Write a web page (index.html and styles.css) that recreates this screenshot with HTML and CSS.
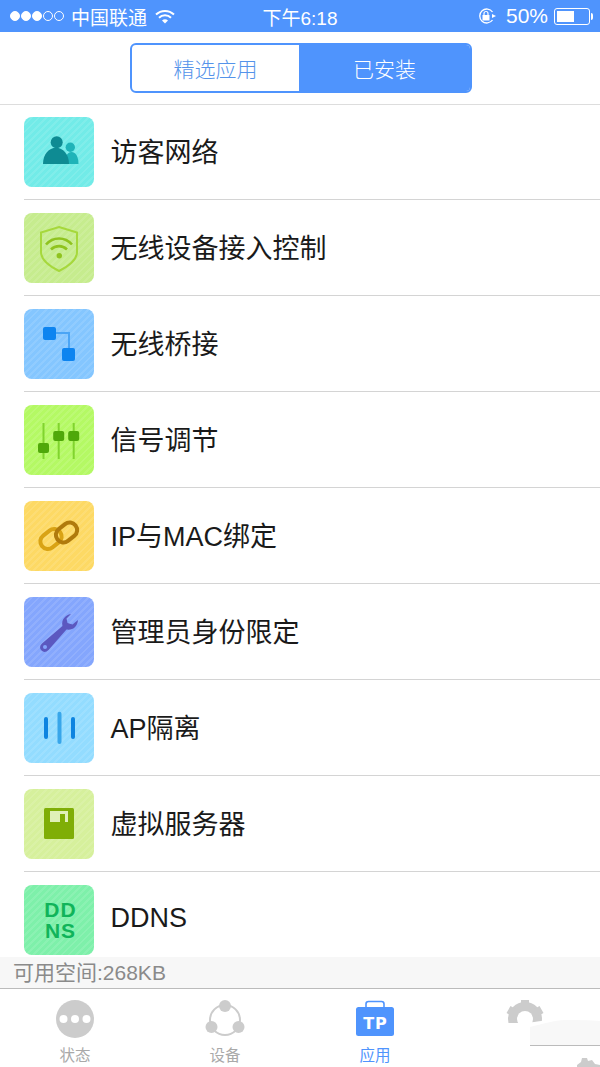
FILE: index.html
```html
<!DOCTYPE html>
<html lang="zh-CN">
<head>
    <meta charset="UTF-8">
    <meta name="viewport" content="width=device-width, initial-scale=1.0">
    <title>应用</title>
    <link rel="stylesheet" href="styles.css">
</head>
<body>
    <div class="status-bar">
        <div class="status-left">
            <span class="signal"><i class="on"></i><i class="on"></i><i class="on"></i><i></i><i></i></span>
            <span>中国联通</span>
            <svg class="wifi" width="20" height="15" viewBox="0 0 20 15">
                <path d="M1 5.500a13 13 0 0 1 18 0M4 8.800a8.600 8.600 0 0 1 12 0" fill="none" stroke="#fff" stroke-width="2"/>
                <path d="M7 11.600a4.300 4.300 0 0 1 6 0L10 14.600z" fill="#fff"/>
            </svg>
        </div>
        <div class="status-time">下午6:18</div>
        <div class="status-right">
            <svg width="20" height="18" viewBox="0 0 20 18">
                <path d="M15.500 5A7 7 0 1 0 15.500 13" fill="none" stroke="#fff" stroke-width="1.300"/>
                <path d="M15 7l4 2-4 2z" fill="#fff"/>
                <rect x="5.500" y="8" width="7" height="5.500" fill="#fff"/>
                <path d="M7 8V6.500a2 2 0 0 1 4 0V8" fill="none" stroke="#fff" stroke-width="1.200"/>
            </svg>
            <span class="battery-text">50%</span>
            <span class="battery"><i></i></span>
        </div>
    </div>

    <div class="top-bar">
        <div class="segment">
            <div class="segment-item">精选应用</div>
            <div class="segment-item active">已安装</div>
        </div>
    </div>

    <ul class="app-list">
        <li class="app-row">
            <span class="app-icon teal">
                <svg viewBox="0 0 70 70">
                    <circle cx="46.300" cy="30.300" r="4.700" fill="#1fb3b8"/>
                    <path d="M41 47c0-7 2-12 6.500-12S54.500 40 54.500 47z" fill="#1fb3b8"/>
                    <circle cx="32.700" cy="25.300" r="6" fill="#0e8b93"/>
                    <path d="M19 47c0-10 6-16.300 13-16.300S45 37 45 47z" fill="#0e8b93"/>
                </svg>
            </span>
            <span class="app-name">访客网络</span>
        </li>
        <li class="app-row">
            <span class="app-icon lime">
                <svg viewBox="0 0 70 70">
                    <path d="M35 14l18 5.500V39c0 8-10 15-18 19-8-4-18-11-18-19V19.500z" fill="none" stroke="#a6d83c" stroke-width="2"/>
                    <path d="M22 31.500c7-8 19-8 26 0M27 36.500c4.500-4.500 11.500-4.500 16 0" fill="none" stroke="#8fc31f" stroke-width="2.600"/>
                    <circle cx="35.300" cy="42.700" r="2.700" fill="#8fc31f"/>
                </svg>
            </span>
            <span class="app-name">无线设备接入控制</span>
        </li>
        <li class="app-row">
            <span class="app-icon blue">
                <svg viewBox="0 0 70 70">
                    <path d="M32 24h13v15" fill="none" stroke="#4ba5f5" stroke-width="2"/>
                    <rect x="19" y="18" width="13" height="13" rx="2" fill="#0d84f0"/>
                    <rect x="38" y="39" width="13" height="13" rx="2" fill="#0d84f0"/>
                </svg>
            </span>
            <span class="app-name">无线桥接</span>
        </li>
        <li class="app-row">
            <span class="app-icon green">
                <svg viewBox="0 0 70 70">
                    <path d="M19.500 18v36M34.700 18v36M49.700 18v36" stroke="#80d42e" stroke-width="2"/>
                    <rect x="14" y="38" width="11" height="10" rx="2" fill="#4fa80a"/>
                    <rect x="29.200" y="26" width="11" height="10" rx="2" fill="#4fa80a"/>
                    <rect x="44.200" y="26" width="11" height="10" rx="2" fill="#4fa80a"/>
                </svg>
            </span>
            <span class="app-name">信号调节</span>
        </li>
        <li class="app-row">
            <span class="app-icon yellow">
                <svg viewBox="0 0 70 70">
                    <rect x="-11.500" y="-7.500" width="23" height="15" rx="7.500" transform="translate(27 38) rotate(-38)" fill="none" stroke="#d9a314" stroke-width="4"/>
                    <rect x="-11.500" y="-7.500" width="23" height="15" rx="7.500" transform="translate(42.500 31.500) rotate(-38)" fill="none" stroke="#b07a0c" stroke-width="4"/>
                </svg>
            </span>
            <span class="app-name">IP与MAC绑定</span>
        </li>
        <li class="app-row">
            <span class="app-icon periwinkle">
                <svg viewBox="0 0 70 70">
                    <path d="M47 17c-6 1-10 6-8.500 12L18 46.500c-2.500 2.500-2.500 5-.5 7s4.500 2 7-.5l18-20.500c6.500 1 11-3 11.500-9.500l-5.500 4.500-5-1.500-1-4.500z" fill="#5b58c0"/>
                    <circle cx="21" cy="50" r="2" fill="#84a4fc"/>
                </svg>
            </span>
            <span class="app-name">管理员身份限定</span>
        </li>
        <li class="app-row">
            <span class="app-icon sky">
                <svg viewBox="0 0 70 70">
                    <rect x="20" y="24" width="4" height="22" rx="2" fill="#0d84e0"/>
                    <rect x="33.500" y="18.700" width="4" height="32.300" rx="2" fill="#38a6ea"/>
                    <rect x="47" y="24" width="4" height="22" rx="2" fill="#0d84e0"/>
                </svg>
            </span>
            <span class="app-name">AP隔离</span>
        </li>
        <li class="app-row">
            <span class="app-icon pale">
                <svg viewBox="0 0 70 70">
                    <rect x="20" y="19" width="30" height="31" rx="1.500" fill="#7fae06"/>
                    <rect x="26" y="22" width="18" height="11" fill="#dff0b8"/>
                    <rect x="36" y="25" width="5" height="8" fill="#7fae06"/>
                </svg>
            </span>
            <span class="app-name">虚拟服务器</span>
        </li>
        <li class="app-row">
            <span class="app-icon mint"><span class="ddns-mark">DD<br>NS</span></span>
            <span class="app-name">DDNS</span>
        </li>
    </ul>

    <div class="storage">可用空间:268KB</div>

    <nav class="tab-bar">
        <div class="tab">
            <svg width="40" height="40" viewBox="0 0 40 40">
                <circle cx="20" cy="20" r="19" fill="#ccc"/>
                <circle cx="8.500" cy="20" r="4" fill="#fff"/>
                <circle cx="20" cy="20" r="4" fill="#fff"/>
                <circle cx="31.500" cy="20" r="4" fill="#fff"/>
            </svg>
            <span>状态</span>
        </div>
        <div class="tab">
            <svg width="40" height="40" viewBox="0 0 40 40">
                <circle cx="20" cy="21" r="15" fill="none" stroke="#ccc" stroke-width="2"/>
                <circle cx="20" cy="7" r="6" fill="#ccc"/>
                <circle cx="6.500" cy="28" r="6" fill="#ccc"/>
                <circle cx="33.500" cy="28" r="6" fill="#ccc"/>
            </svg>
            <span>设备</span>
        </div>
        <div class="tab active">
            <svg width="40" height="40" viewBox="0 0 40 40">
                <path d="M11 9V5A2.500 2.500 0 0 1 13.500 2.500h13A2.500 2.500 0 0 1 29 5V9" fill="none" stroke="#4f94fd" stroke-width="1.600"/>
                <rect x="1" y="8" width="38" height="29" rx="2.500" fill="#4f94fd"/>
                <text x="20.500" y="30" text-anchor="middle" class="bag-text">TP</text>
            </svg>
            <span>应用</span>
        </div>
        <div class="tab">
            <svg width="40" height="40" viewBox="0 0 40 40">
                <circle cx="20" cy="20" r="12.500" fill="none" stroke="#ccc" stroke-width="9"/>
                <path d="M20 20V1M20 20L36.500 10.500M20 20L36.500 29.500M20 20L3.500 10.500M20 20L3.500 29.500M20 20V39" stroke="#ccc" stroke-width="8"/>
                <circle cx="20" cy="20" r="8" fill="#fff"/>
            </svg>
            <span></span>
        </div>
    </nav>

    <!-- white smear lying over the corner of the tab bar -->
    <svg class="corner-smear" width="110" height="52" viewBox="0 0 110 52">
        <path d="M0 8h35c12-1 25-4 40-4s25 0 35 1v47H0z" fill="#fff"/>
        <path d="M40 12c12-3 25-7 35-7s25 0 35 1v24.500H40z" fill="#f8f8f8"/>
        <path d="M40 30.500h70" stroke="#bbb" stroke-width="1"/>
        <path d="M87 52v-2l4-3 1-4h5l1 3 4-1 3 4 5 1v2z" fill="#ccc"/>
    </svg>
</body>
</html>
```

FILE: styles.css
```css
* {
    box-sizing: border-box;
}
html, body {
    height: 100%;
}
body {
    position: relative;
    display: flex;
    flex-direction: column;
    height: 1067px;
    margin: 0;
    overflow: hidden;
    background-color: #fff;
    font-family: "Liberation Sans", "Noto Sans CJK SC", sans-serif;
}

/* status bar */
.status-bar {
    display: grid;
    grid-template-columns: 1fr auto 1fr;
    align-items: center;
    flex: none;
    height: 32px;
    padding: 0 10px;
    background-color: #4f94fd;
    color: #fff;
    font-size: 19px;
}
.status-left {
    display: flex;
    align-items: center;
    gap: 7px;
}
.signal {
    display: flex;
    gap: 1px;
}
.signal i {
    width: 10px;
    height: 10px;
    border: 1px solid #fff;
    border-radius: 50%;
}
.signal i.on {
    background-color: #fff;
}
.wifi {
    margin-left: 1px;
}
.status-right {
    display: flex;
    align-items: center;
    justify-content: flex-end;
    gap: 4px;
}
.battery-text {
    margin-left: 5px;
    font-size: 21px;
}
.battery {
    display: block;
    position: relative;
    width: 36px;
    height: 17px;
    margin-left: 2px;
    padding: 2px;
    border: 1px solid #fff;
    border-radius: 3px;
}
.battery::after {
    content: "";
    position: absolute;
    top: 4px;
    right: -4px;
    width: 2px;
    height: 7px;
    border-radius: 0 2px 2px 0;
    background-color: #fff;
}
.battery i {
    display: block;
    width: 17px;
    height: 100%;
    background-color: #fff;
}

/* segmented switch */
.top-bar {
    position: relative;
    z-index: 1;
    display: flex;
    justify-content: center;
    flex: none;
    height: 72px;
    padding: 11px 0 0 2px;
    box-shadow: 0 1px 0 #ddd;
    background-color: #fff;
}
.segment {
    display: flex;
    width: 342px;
    height: 50px;
    border: 2px solid #4f94fd;
    border-radius: 6px;
    overflow: hidden;
}
.segment-item {
    display: flex;
    align-items: center;
    justify-content: center;
    font-size: 21px;
    font-weight: 300;
    color: #5493ea;
}
.segment-item:first-child {
    width: 167px;
}
.segment-item.active {
    flex: 1;
    background-color: #4f94fd;
    color: #fff;
}

/* app rows */
.app-list {
    flex: 1;
    min-height: 0;
    margin: 0;
    padding: 0 0 0 24px;
    list-style: none;
    overflow: hidden;
}
.app-row {
    display: flex;
    align-items: center;
    gap: 16.5px;
    height: 96px;
    padding: 13px 0 12px;
    border-bottom: 1px solid #d4d4d4;
}
.app-row:last-child {
    border-bottom-color: transparent;
}
.app-icon {
    display: flex;
    align-items: center;
    justify-content: center;
    flex: none;
    width: 70px;
    height: 70px;
    border-radius: 8px;
    background-image: repeating-linear-gradient(135deg, rgba(255, 255, 255, .1) 0 2px, transparent 2px 5px);
}
.app-icon svg {
    display: block;
    width: 70px;
    height: 70px;
}
.teal { background-color: #72ebe8; }
.lime { background-color: #c6ec8e; }
.blue { background-color: #84c6ff; }
.green { background-color: #b4f964; }
.yellow { background-color: #fdd964; }
.periwinkle { background-color: #84a6fd; }
.sky { background-color: #93dcff; }
.pale { background-color: #d6f09c; }
.mint { background-color: #7ef0aa; }
.app-name {
    margin-bottom: 4px;
    font-size: 27px;
    color: #1a1a1a;
}
.ddns-mark {
    padding-left: 3px;
    font-size: 21px;
    font-weight: 700;
    line-height: 21px;
    letter-spacing: 1px;
    text-align: center;
    color: #10b45a;
}

/* free space line */
.storage {
    flex: none;
    height: 31px;
    padding-left: 13px;
    background-color: #f7f7f7;
    font-size: 21px;
    line-height: 31px;
    color: #8a8a8a;
}

/* bottom tabs */
.tab-bar {
    display: grid;
    grid-template-columns: repeat(4, 1fr);
    flex: none;
    height: 79px;
    padding-top: 10px;
    border-top: 1px solid #bbb;
    background-color: #fff;
}
.tab {
    display: flex;
    flex-direction: column;
    align-items: center;
    gap: 4px;
    font-size: 15.5px;
    color: #a9a9a9;
}
.tab svg {
    display: block;
}
.tab.active {
    color: #4f94fd;
}
.bag-text {
    font-family: "DejaVu Sans", sans-serif;
    font-size: 16px;
    font-weight: 700;
    letter-spacing: 1px;
    fill: #fff;
}
.corner-smear {
    position: absolute;
    right: 0;
    bottom: 0;
}
```
